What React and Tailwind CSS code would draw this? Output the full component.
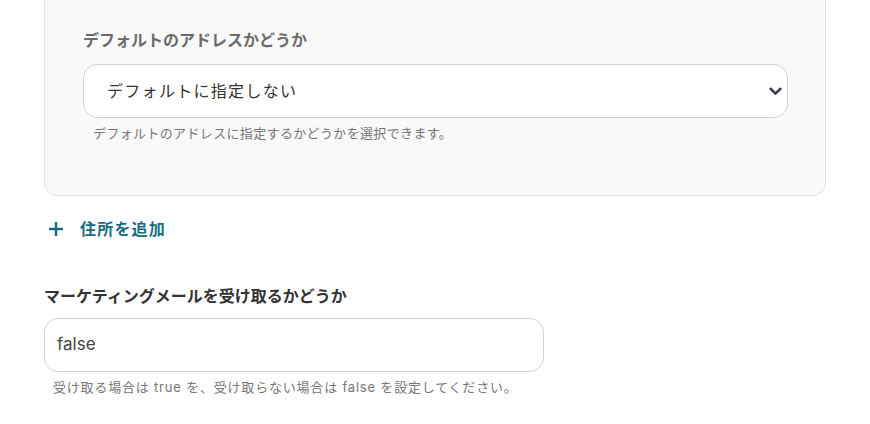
export default function App() {
  return (
    <div
      className="w-[870px] h-[424px] bg-white overflow-hidden px-[44px]"
      style={{ fontFamily: 'Inter, "Noto Sans CJK JP", sans-serif' }}
    >
      <div className="bg-[#f9f9f9] border border-t-0 border-[#e3e3e3] rounded-b-[14px] pt-[28px] pb-[53px] pl-[38px] pr-[37px]">
        <div className="text-[16px] leading-[24px] font-semibold text-[#6b6b6b]">
          デフォルトのアドレスかどうか
        </div>
        <div className="mt-[12px] h-[54px] bg-white border border-[#cdd3dc] rounded-[14px] flex items-center pl-[23px] pr-[5px]">
          <span className="flex-1 text-[16px] tracking-[1.3px] text-[#333]">デフォルトに指定しない</span>
          <svg width="13" height="9" viewBox="0 0 13 9">
            <path d="M1.6 1.8 L6.5 6.6 L11.4 1.8" fill="none" stroke="#3a3f47" strokeWidth="2.6" strokeLinecap="round" strokeLinejoin="round" />
          </svg>
        </div>
        <div className="mt-[6px] ml-[10px] text-[13px] leading-[18px] tracking-[0.35px] text-[#767676]">
          デフォルトのアドレスに指定するかどうかを選択できます。
        </div>
      </div>

      <div className="mt-[21px] flex items-center h-[24px] text-[#176b7f]">
        <svg width="16" height="16" viewBox="0 0 16 16" className="ml-[4px]">
          <path d="M8 1 V15 M1 8 H15" stroke="#176b7f" strokeWidth="2.4" strokeLinecap="butt" />
        </svg>
        <span className="ml-[16px] text-[16px] font-semibold tracking-[1.2px]">住所を追加</span>
      </div>

      <div className="mt-[43px] text-[16px] leading-[24px] font-semibold text-[#333]">
        マーケティングメールを受け取るかどうか
      </div>
      <div className="mt-[10px] w-[500px] h-[54px] bg-white border border-[#cdd3dc] rounded-[14px] flex items-center pl-[12px]">
        <span className="text-[17px] text-[#444]">false</span>
      </div>
      <div className="mt-[6px] ml-[9px] text-[13px] leading-[18px] tracking-[0.8px] text-[#767676]">
        受け取る場合は true を、受け取らない場合は false を設定してください。
      </div>
    </div>
  );
}
